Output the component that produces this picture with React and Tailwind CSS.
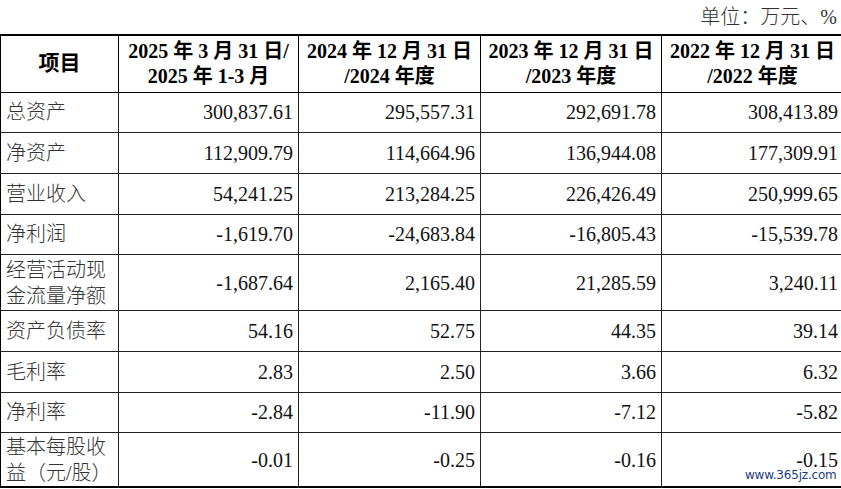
import React from "react";

const rows = [
  { label: ["总资产"], vals: ["300,837.61", "295,557.31", "292,691.78", "308,413.89"] },
  { label: ["净资产"], vals: ["112,909.79", "114,664.96", "136,944.08", "177,309.91"] },
  { label: ["营业收入"], vals: ["54,241.25", "213,284.25", "226,426.49", "250,999.65"] },
  { label: ["净利润"], vals: ["-1,619.70", "-24,683.84", "-16,805.43", "-15,539.78"] },
  { label: ["经营活动现", "金流量净额"], vals: ["-1,687.64", "2,165.40", "21,285.59", "3,240.11"], tall: true },
  { label: ["资产负债率"], vals: ["54.16", "52.75", "44.35", "39.14"] },
  { label: ["毛利率"], vals: ["2.83", "2.50", "3.66", "6.32"] },
  { label: ["净利率"], vals: ["-2.84", "-11.90", "-7.12", "-5.82"] },
  { label: ["基本每股收", "益（元/股）"], vals: ["-0.01", "-0.25", "-0.16", "-0.15"], tall: true, last: true },
];

const headers = [
  ["2025 年 3 月 31 日/", "2025 年 1-3 月"],
  ["2024 年 12 月 31 日", "/2024 年度"],
  ["2023 年 12 月 31 日", "/2023 年度"],
  ["2022 年 12 月 31 日", "/2022 年度"],
];

const font = { fontFamily: '"Liberation Serif", "Noto Sans CJK SC", serif' };

export default function App() {
  return (
    <div className="relative w-[841px] h-[489px] bg-white overflow-hidden text-black" style={font}>
      <div className="h-[34px] flex justify-end items-start pr-[4px] pt-[5px] text-[20px] leading-[24px] text-[#333] font-light">
        单位：万元、%
      </div>
      <table className="table-fixed border-collapse w-[843px] border-t-2 border-b-2 border-l border-black">
        <colgroup>
          <col className="w-[118px]" />
          <col className="w-[180px]" />
          <col className="w-[182px]" />
          <col className="w-[181px]" />
          <col className="w-[182px]" />
        </colgroup>
        <thead>
          <tr className="h-[57px]">
            <th className="border-r border-b border-black text-[21px] font-bold leading-[25px] text-center">项目</th>
            {headers.map((h, i) => (
              <th key={i} className="border-r border-b border-black text-[20px] font-bold leading-[25px] text-center whitespace-nowrap px-0">
                <div>{h[0]}</div>
                <div>{h[1]}</div>
              </th>
            ))}
          </tr>
        </thead>
        <tbody>
          {rows.map((r, i) => (
            <tr key={i} className={r.tall ? (r.last ? "h-[54px]" : "h-[56px]") : "h-[40.7px]"}>
              <td className="border-r border-b border-[#222] pl-[5px] text-[20px] leading-[26px] text-[#333] font-light align-middle whitespace-nowrap">
                {r.label.map((l, j) => (
                  <div key={j}>{l}</div>
                ))}
              </td>
              {r.vals.map((v, j) => (
                <td key={j} className="border-r border-b border-[#222] pr-[5px] text-right text-[20px] leading-[26px] text-[#111] align-middle">
                  {v}
                </td>
              ))}
            </tr>
          ))}
        </tbody>
      </table>
      <div
        className="absolute left-[745px] top-[468px] text-[12px] leading-[14px] tracking-[-0.2px] text-[#1d3d78]"
        style={{ fontFamily: '"DejaVu Sans", sans-serif' }}
      >
        www.365jz.com
      </div>
    </div>
  );
}
